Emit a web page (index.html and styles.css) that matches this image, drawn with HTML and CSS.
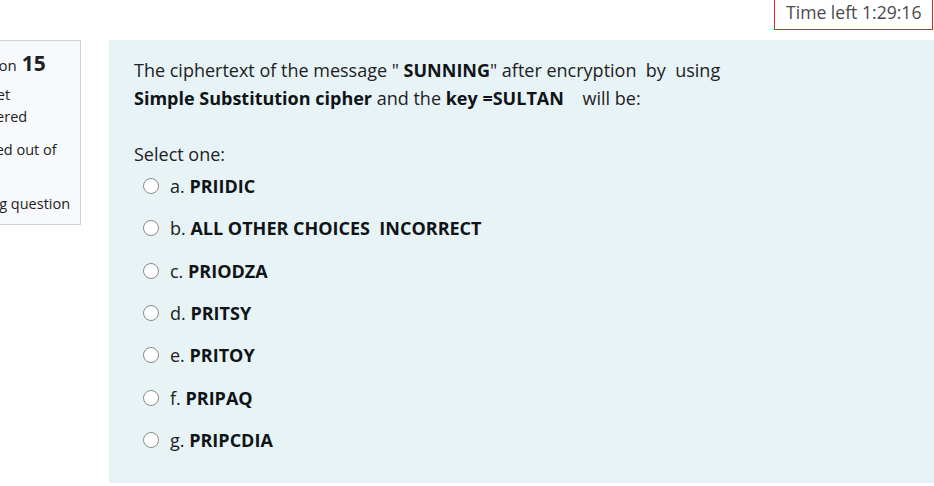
FILE: index.html
```html
<!DOCTYPE html>
<html>
<head>
<meta charset="utf-8">
<link rel="stylesheet" href="styles.css">
</head>
<body>
<div class="topbar">
  <div class="timer">Time left 1:29:16</div>
</div>
<div class="que">
  <div class="info">
    <h3 class="no">Question <span class="qno">15</span></h3>
    <div class="state">Not yet answered</div>
    <div class="grade">Marked out of 1.00</div>
    <div class="flag"><span class="flagicon"></span>Flag question</div>
  </div>
  <div class="content">
    <div class="qtext">
      <p>The ciphertext of the message " <b>SUNNING</b>" after encryption&nbsp; by&nbsp; using<br><b>Simple Substitution cipher</b> and the <b>key =SULTAN</b> &nbsp; &nbsp;will be:</p>
    </div>
    <div class="prompt">Select one:</div>
    <div class="answer">
      <div class="opt"><span class="radio"></span><span class="lbl">a. <b>PRIIDIC</b></span></div>
      <div class="opt"><span class="radio"></span><span class="lbl">b. <b>ALL OTHER CHOICES&nbsp; INCORRECT</b></span></div>
      <div class="opt"><span class="radio"></span><span class="lbl">c. <b>PRIODZA</b></span></div>
      <div class="opt"><span class="radio"></span><span class="lbl">d. <b>PRITSY</b></span></div>
      <div class="opt"><span class="radio"></span><span class="lbl">e. <b>PRITOY</b></span></div>
      <div class="opt"><span class="radio"></span><span class="lbl">f. <b>PRIPAQ</b></span></div>
      <div class="opt"><span class="radio"></span><span class="lbl">g. <b>PRIPCDIA</b></span></div>
    </div>
  </div>
</div>
</body>
</html>
```
FILE: styles.css
```css
* { box-sizing: border-box; }
html, body { margin: 0; padding: 0; background: #fff; overflow: hidden; }
body {
  font-family: "Open Sans", "Noto Sans", sans-serif;
  color: #1d2125;
  width: 934px;
  height: 486px;
}
.topbar {
  height: 40px;
  display: flex;
  justify-content: flex-end;
  align-items: flex-start;
  padding-right: 1px;
}
.timer {
  width: 159px;
  height: 41px;
  margin-top: -11px;
  border: 1px solid #ca3120;
  color: #4a4a4a;
  font-size: 17.6px;
  line-height: 20px;
  padding: 12px 0 0 11px;
  white-space: nowrap;
}
.que {
  display: flex;
  align-items: flex-start;
  gap: 28px;
}
.info {
  width: 150px;
  margin-left: -69px;
  flex: none;
  background: #f8f9fa;
  border: 1px solid #cdd3da;
  padding: 10px 0 0 29px;
  height: 185px;
  font-size: 14.5px;
  line-height: 22px;
}
.no {
  margin: 0 0 7px -8px;
  font-size: 15px;
  font-weight: normal;
  line-height: 24px;
  white-space: nowrap;
}
.qno { font-size: 21px; font-weight: bold; margin-left: 1px; }
.state, .grade { width: 100px; }
.grade { margin-top: 11px; height: 44px; }
.flag { margin-top: 10px; white-space: nowrap; }
.flagicon { display: inline-block; width: 19px; }
.content {
  flex: 1;
  background: #e7f3f5;
  height: 443px;
  padding: 16px 25px 0 25px;
  font-size: 18px;
  line-height: 28px;
}
.qtext p { margin: 0 0 28px; }
b { font-weight: bold; color: #0f1418; }
.prompt { margin: 0; }
.answer { padding-left: 9px; padding-top: 2px; }
.opt {
  display: flex;
  align-items: center;
  height: 42.33px;
  padding-bottom: 10px;
}
.radio {
  width: 16px;
  height: 16px;
  border: 1px solid #8a8a8a;
  border-radius: 50%;
  background: #fff;
  margin-right: 11px;
  flex: none;
}
```
